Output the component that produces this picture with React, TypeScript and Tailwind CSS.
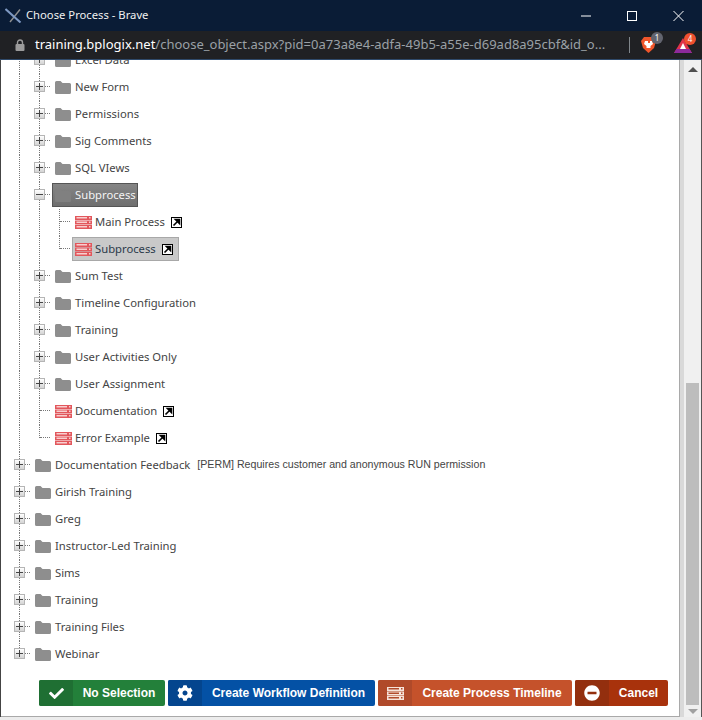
import { FaCheck, FaCog, FaMinusCircle } from "react-icons/fa";

type Node = {
  label: string;
  level: 0 | 1 | 2;
  kind: "folder" | "process";
  toggle?: "plus" | "minus";
  last?: boolean;
  selected?: "dark" | "light";
  note?: string;
};

const nodes: Node[] = [
  { label: "Excel Data", level: 1, kind: "folder", toggle: "plus" },
  { label: "New Form", level: 1, kind: "folder", toggle: "plus" },
  { label: "Permissions", level: 1, kind: "folder", toggle: "plus" },
  { label: "Sig Comments", level: 1, kind: "folder", toggle: "plus" },
  { label: "SQL VIews", level: 1, kind: "folder", toggle: "plus" },
  { label: "Subprocess", level: 1, kind: "folder", toggle: "minus", selected: "dark" },
  { label: "Main Process", level: 2, kind: "process" },
  { label: "Subprocess", level: 2, kind: "process", last: true, selected: "light" },
  { label: "Sum Test", level: 1, kind: "folder", toggle: "plus" },
  { label: "Timeline Configuration", level: 1, kind: "folder", toggle: "plus" },
  { label: "Training", level: 1, kind: "folder", toggle: "plus" },
  { label: "User Activities Only", level: 1, kind: "folder", toggle: "plus" },
  { label: "User Assignment", level: 1, kind: "folder", toggle: "plus" },
  { label: "Documentation", level: 1, kind: "process" },
  { label: "Error Example", level: 1, kind: "process", last: true },
  {
    label: "Documentation Feedback",
    level: 0,
    kind: "folder",
    toggle: "plus",
    note: "[PERM] Requires customer and anonymous RUN permission",
  },
  { label: "Girish Training", level: 0, kind: "folder", toggle: "plus" },
  { label: "Greg", level: 0, kind: "folder", toggle: "plus" },
  { label: "Instructor-Led Training", level: 0, kind: "folder", toggle: "plus" },
  { label: "Sims", level: 0, kind: "folder", toggle: "plus" },
  { label: "Training", level: 0, kind: "folder", toggle: "plus" },
  { label: "Training Files", level: 0, kind: "folder", toggle: "plus" },
  { label: "Webinar", level: 0, kind: "folder", toggle: "plus", last: true },
];

function Folder({ light }: { light?: boolean }) {
  return (
    <svg width="16" height="13" viewBox="0 0 16 13" className="shrink-0">
      <path
        d="M0 1.5Q0 0 1.5 0H5.5L7.5 2H14.5Q16 2 16 3.5V11.5Q16 13 14.5 13H1.5Q0 13 0 11.5Z"
        fill={light ? "#808080" : "#8e8e8e"}
      />
    </svg>
  );
}

// stacked process bars, also used on the timeline button
function ProcessIcon({ edge, fill }: { edge: string; fill: string }) {
  return (
    <svg width="17" height="13" viewBox="0 0 17 13" className="shrink-0">
      {[0, 4.5, 9].map((y) => (
        <g key={y}>
          <rect x="0" y={y} width="17" height="4" fill={edge} />
          <rect x="1.5" y={y + 1} width="10.5" height="1.5" fill={fill} />
          <rect x="14" y={y + 1} width="1.5" height="1.5" fill={fill} />
        </g>
      ))}
    </svg>
  );
}

function Shortcut() {
  return (
    <svg width="11" height="11" viewBox="0 0 11 11" className="ml-[6px] shrink-0">
      <rect x="0.5" y="0.5" width="10" height="10" fill="#fff" stroke="#000" />
      <path d="M2.5 8.5L6 5M4.5 2.5H8.5V6.5Z" stroke="#000" strokeWidth="1.6" fill="#000" />
    </svg>
  );
}

function Guide() {
  return (
    <div className="w-5 h-full shrink-0">
      <div className="ml-[9px] h-full border-l border-dotted border-[#777]" />
    </div>
  );
}

function Connector({ node }: { node: Node }) {
  return (
    <div className="relative w-5 h-full shrink-0">
      <div
        className={`ml-[9px] border-l border-dotted border-[#777] ${node.last ? "h-[13px]" : "h-full"}`}
      />
      <div className="absolute left-[10px] top-[12px] w-[10px] border-t border-dotted border-[#777]" />
      {node.toggle && (
        <div className="absolute left-[4px] top-[7px] w-[11px] h-[11px] border border-[#b5b5b5] bg-gradient-to-b from-[#ffffff] to-[#d4d4d4] flex items-center justify-center">
          <div className="relative w-[7px] h-px bg-[#444]">
            {node.toggle === "plus" && (
              <div className="absolute left-[3px] top-[-3px] w-px h-[7px] bg-[#444]" />
            )}
          </div>
        </div>
      )}
    </div>
  );
}

function TreeRow({ node }: { node: Node }) {
  const itemClass =
    node.selected === "dark"
      ? "bg-gradient-to-b from-[#858585] to-[#6f6f6f] border-[#555] text-[#f4f4f4]"
      : node.selected === "light"
        ? "bg-[#c9c9c9] border-[#a8a8a8] text-[#2b3a4a]"
        : "border-transparent text-[#444]";

  return (
    <div className="flex h-[27px] shrink-0">
      {node.level >= 1 && <Guide />}
      {node.level >= 2 && <Guide />}
      <Connector node={node} />
      <div
        className={`ml-[2px] mt-px h-6 flex items-center pl-[2px] pr-[1px] border whitespace-nowrap ${itemClass}`}
      >
        {node.kind === "folder" ? (
          <Folder light={node.selected === "dark"} />
        ) : (
          <ProcessIcon edge="#e2575c" fill="#f8cfcf" />
        )}
        <span className={node.kind === "folder" ? "ml-1" : "ml-[3px]"}>{node.label}</span>
        {node.kind === "process" && <Shortcut />}
        {node.selected === "light" && <span className="w-1" />}
        {node.note && (
          <span className="ml-[7px] text-[10.65px] text-[#444] font-['Liberation_Sans',sans-serif]">
            {node.note}
          </span>
        )}
      </div>
    </div>
  );
}

function ActionButton({
  icon,
  label,
  width,
  main,
  dark,
}: {
  icon: React.ReactNode;
  label: string;
  width: string;
  main: string;
  dark: string;
}) {
  return (
    <button
      className={`h-[26px] ${width} ${main} rounded-[2px] flex items-stretch text-white font-bold text-[12px] font-['Liberation_Sans',sans-serif]`}
    >
      <span className={`w-[34px] shrink-0 rounded-l-[2px] flex items-center justify-center ${dark}`}>
        {icon}
      </span>
      <span className="flex-1 flex items-center justify-center">{label}</span>
    </button>
  );
}

function TitleBar() {
  return (
    <div className="h-[31px] shrink-0 bg-[#0a1c36] flex items-center pl-[5px] text-[11.25px] text-[#f0f0f0]">
      <svg width="17" height="15" viewBox="0 0 17 15" className="shrink-0">
        <path d="M15 1.5L5 14" stroke="#8f8f8f" strokeWidth="1.4" />
        <path d="M0.5 1L15.5 14.5" stroke="#7f9ac4" strokeWidth="2" />
      </svg>
      <span className="ml-[4px]">Choose Process - Brave</span>
      <div className="ml-auto flex items-center">
        <svg width="46" height="12" viewBox="0 0 46 12">
          <path d="M0 6H10" stroke="#fff" />
        </svg>
        <svg width="46" height="12" viewBox="0 0 46 12">
          <rect x="0.5" y="1.5" width="9" height="9" fill="none" stroke="#fff" />
        </svg>
        <svg width="29" height="12" viewBox="0 0 29 12">
          <path d="M0.5 1L10.5 11M10.5 1L0.5 11" stroke="#fff" />
        </svg>
      </div>
    </div>
  );
}

function AddressBar() {
  return (
    <div className="h-[29px] shrink-0 bg-[#202124] border-b border-[#2f4a6b] flex items-center pl-[15px] text-[13px]">
      <svg width="10" height="12" viewBox="0 0 10 12" className="shrink-0">
        <path d="M2.5 5V3.5a2.5 2.5 0 0 1 5 0V5" fill="none" stroke="#9b9b9b" strokeWidth="1.4" />
        <rect x="0.5" y="5" width="9" height="7" rx="1" fill="#9b9b9b" />
      </svg>
      <div className="ml-[10px] w-[584px] whitespace-nowrap">
        <span className="text-white">training.bplogix.net</span>
        <span className="text-[#9aa0a6]">/choose_object.aspx?pid=0a73a8e4-adfa-49b5-a55e-d69ad8a95cbf&id_o...</span>
      </div>
      <div className="ml-[10px] w-px h-4 bg-[#80868b]" />
      <div className="relative ml-[11px] w-[15px]">
        <svg width="15" height="16" viewBox="0 0 15 16" className="block">
          <path d="M3 0H12L15 4L13 11L7.5 16L2 11L0 4Z" fill="#f1562b" />
          <path d="M4 4H7V6H9V4H11L12 7L9.5 9V11H5.5V9L3 7Z" fill="#fff" />
        </svg>
        <span className="absolute left-[10px] top-[-5px] w-3 h-3 rounded-full bg-[#62646e] text-[8px] leading-3 text-center text-white">
          1
        </span>
      </div>
      <div className="relative ml-[18px] w-[18px]">
        <svg width="18" height="15" viewBox="0 0 18 15" className="block">
          <path d="M9 0L18 15H0Z" fill="#e0334a" />
          <path d="M2.4 11H15.6L18 15H0Z" fill="#8c2a9c" />
          <path d="M9 5L12 11H6Z" fill="#fff" />
        </svg>
        <span className="absolute left-[10px] top-[-5px] w-3 h-3 rounded-full bg-[#f0502e] text-[8px] leading-3 text-center text-white">
          4
        </span>
      </div>
    </div>
  );
}

function Scrollbar() {
  return (
    <div className="w-[23px] shrink-0 flex border-l border-[#a9a9a9]">
      <div className="w-[4px] bg-[#d9d9d9]" />
      <div className="flex-1 bg-[#f0f0f0] flex flex-col items-center pt-[7px] pb-[3px] border-r border-[#555]">
        <div className="w-0 h-0 border-x-[5px] border-x-transparent border-b-[5px] border-b-[#505050]" />
        <div className="flex-1 w-full" />
        <div className="w-[13px] h-[322px] bg-[#bdbdbd]" />
        <div className="mt-[4px] w-0 h-0 border-x-[5px] border-x-transparent border-t-[5px] border-t-[#a0a0a0]" />
      </div>
    </div>
  );
}

export default function App() {
  return (
    <div className="w-[702px] h-[720px] flex flex-col bg-[#ececec] overflow-hidden font-['Noto_Sans',sans-serif]">
      <TitleBar />
      <AddressBar />
      <div className="h-[657px] flex border-l border-[#444]">
        <div className="flex-1 flex flex-col bg-white border-b border-[#a9a9a9]">
          <div className="h-[620px] shrink-0 overflow-hidden">
            <div className="flex flex-col pl-[9px] mt-[-13px] text-[11.25px]">
              {nodes.map((node, i) => (
                <TreeRow key={i} node={node} />
              ))}
            </div>
          </div>
          <div className="flex gap-[3px] pl-[38px]">
            <ActionButton
              icon={<FaCheck size={15} />}
              label="No Selection"
              width="w-[126px]"
              main="bg-[#23803a]"
              dark="bg-[#1f6f33]"
            />
            <ActionButton
              icon={<FaCog size={16} />}
              label="Create Workflow Definition"
              width="w-[207px]"
              main="bg-[#0451a5]"
              dark="bg-[#04458e]"
            />
            <ActionButton
              icon={<ProcessIcon edge="#f6e3da" fill="#b04a2a" />}
              label="Create Process Timeline"
              width="w-[194px]"
              main="bg-[#c5522b]"
              dark="bg-[#b04a2a]"
            />
            <ActionButton
              icon={<FaMinusCircle size={16} />}
              label="Cancel"
              width="w-[93px]"
              main="bg-[#a8320c]"
              dark="bg-[#932f0e]"
            />
          </div>
        </div>
        <Scrollbar />
      </div>
    </div>
  );
}
